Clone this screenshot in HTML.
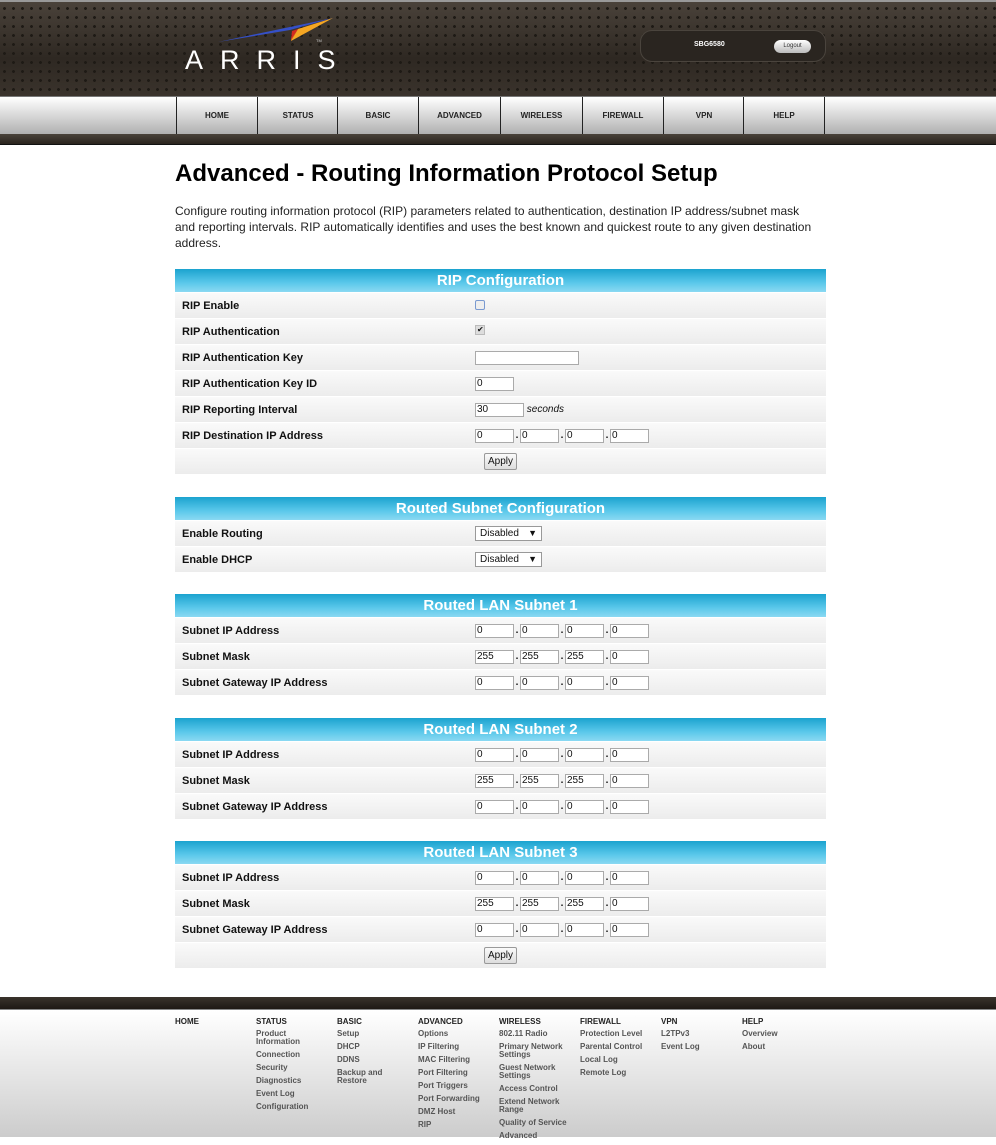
<!DOCTYPE html>
<html><head><style>
*{box-sizing:border-box}
body{margin:0;width:996px;height:1137px;overflow:hidden;font-family:"Liberation Sans",Arial,sans-serif;background:#fff;position:relative}
.hdr{position:absolute;left:0;top:0;width:996px;height:96px;background:radial-gradient(circle,#1e1a15 1.3px,transparent 1.6px) 0 2px/9px 9px,linear-gradient(#4a423a,#2e2822 60%,#3a332c);border-top:2px solid #999}
.logo{position:absolute;left:185px;top:43px;color:#fff;font-size:27px;letter-spacing:17px;font-weight:normal}
.pill{position:absolute;left:640px;top:28px;width:186px;height:32px;border-radius:12px;background:#2a2520;border:1px solid #4a443d}
.pill .m{position:absolute;left:53px;top:10px;color:#fff;font-size:7px;font-weight:bold}
.pill .lo{position:absolute;left:133px;top:9px;width:37px;height:13px;border-radius:7px;background:linear-gradient(#fff,#bbb);font-size:6px;text-align:center;line-height:13px;color:#333}
.nav{position:absolute;left:0;top:96px;width:996px;height:38px;background:linear-gradient(#fff,#d8d8d8 50%,#b0b0b0);border-top:1px solid #777}
.nav div{position:absolute;top:0;height:38px;width:81px;border-left:1px solid #222;font-size:8px;font-weight:bold;text-align:center;line-height:37px;color:#222}
.strip{position:absolute;left:0;top:134px;width:996px;height:11px;background:linear-gradient(#4a423a,#2a241e);border-bottom:1px solid #111}
h1{position:absolute;top:160px;left:175px;margin:0;font-size:24px;font-weight:bold;color:#000}
.desc{position:absolute;top:203px;left:175px;width:645px;font-size:12px;line-height:16px;color:#222;margin:0}
.sec{position:absolute;left:175px;width:651px}
.th{height:23px;background:linear-gradient(#1ba3cf,#5ac8ea 60%,#8ad9f2);color:#fff;font-weight:bold;font-size:15px;text-align:center;line-height:24px}
.r{height:26px;background:linear-gradient(#fafafa,#ececec);border-top:1px solid #fff;position:relative;font-size:11px;font-weight:bold;color:#111}
.r .l{position:absolute;left:7px;top:7px}
.r .v{position:absolute;left:300px;top:6px;font-size:11px;font-weight:normal}
.in{display:inline-block;height:14px;border:1px solid #aaa;background:#fff;font-size:10px;line-height:12px;padding-left:1px;vertical-align:top;font-weight:normal}
.ip .in{width:39px}
.dot{display:inline-block;width:6px;text-align:center;font-weight:bold;font-size:10px}
.sel{display:inline-block;width:67px;height:15px;border:1px solid #999;background:#fff;font-size:10px;line-height:13px;padding-left:4px;position:relative}
.sel:after{content:"▼";position:absolute;right:4px;top:0;font-size:9px}
.btn{display:inline-block;height:17px;border:1px solid #999;background:linear-gradient(#fafafa,#ddd);font-size:10px;padding:0 3px;line-height:15px;border-radius:2px}
.ftop{position:absolute;left:0;top:997px;width:996px;height:13px;background:linear-gradient(#3a332c,#1e1914);border-bottom:1px solid #888}
.foot{position:absolute;left:0;top:1011px;width:996px;height:126px;background:linear-gradient(#fff,#ccc)}
.fc{position:absolute;top:7px;font-size:8px;font-weight:bold;color:#555;line-height:8px}
.fc b{display:block;color:#222;margin-bottom:4px}
.fc span{display:block;margin-bottom:5px}
</style></head><body>
<div class="hdr">
<svg style="position:absolute;left:218px;top:15px" width="120" height="28" viewBox="0 0 120 28"><polygon points="0,25 115,1 72,13" fill="#3550c8"/><polygon points="115,1 80,12 73,24" fill="#f5a623"/><polygon points="80,12 73,24 74,16" fill="#f08020"/><polygon points="74,14 80,12 73,23" fill="#d42a20"/><text x="98" y="25" font-size="4" fill="#ccc">TM</text></svg>
<div class="logo">ARRIS</div>
<div class="pill"><span class="m">SBG6580</span><span class="lo">Logout</span></div>
</div>
<div class="nav">
<div style="left:176px">HOME</div><div style="left:257px">STATUS</div><div style="left:337px">BASIC</div><div style="left:418px;width:82px">ADVANCED</div><div style="left:500px;width:82px">WIRELESS</div><div style="left:582px">FIREWALL</div><div style="left:663px">VPN</div><div style="left:743px;width:82px;border-right:1px solid #222">HELP</div>
</div>
<div class="strip"></div>
<h1>Advanced - Routing Information Protocol Setup</h1>
<p class="desc">Configure routing information protocol (RIP) parameters related to authentication, destination IP address/subnet mask and reporting intervals. RIP automatically identifies and uses the best known and quickest route to any given destination address.</p>

<div class="sec" style="top:269px">
<div class="th">RIP Configuration</div>
<div class="r"><span class="l">RIP Enable</span><span class="v"><span class="in" style="width:10px;height:10px;border-color:#7a9ad0;border-radius:2px;background:#eee;margin-top:1px"></span></span></div>
<div class="r"><span class="l">RIP Authentication</span><span class="v" style="font-size:9px"><span class="in" style="width:10px;height:10px;background:#ddd;border-color:#bbb;font-size:8px;line-height:8px">✔</span></span></div>
<div class="r"><span class="l">RIP Authentication Key</span><span class="v"><span class="in" style="width:104px"></span></span></div>
<div class="r"><span class="l">RIP Authentication Key ID</span><span class="v"><span class="in" style="width:39px">0</span></span></div>
<div class="r"><span class="l">RIP Reporting Interval</span><span class="v"><span class="in" style="width:49px">30</span><i style="font-size:10px"> seconds</i></span></div>
<div class="r"><span class="l">RIP Destination IP Address</span><span class="v ip"><span class="in">0</span><span class="dot">.</span><span class="in">0</span><span class="dot">.</span><span class="in">0</span><span class="dot">.</span><span class="in">0</span></span></div>
<div class="r"><span class="v" style="left:309px;top:4px"><span class="btn">Apply</span></span></div>
</div>

<div class="sec" style="top:497px">
<div class="th">Routed Subnet Configuration</div>
<div class="r"><span class="l">Enable Routing</span><span class="v" style="top:5px"><span class="sel">Disabled</span></span></div>
<div class="r"><span class="l">Enable DHCP</span><span class="v" style="top:5px"><span class="sel">Disabled</span></span></div>
</div>

<div class="sec" style="top:594px">
<div class="th">Routed LAN Subnet 1</div>
<div class="r"><span class="l">Subnet IP Address</span><span class="v ip"><span class="in">0</span><span class="dot">.</span><span class="in">0</span><span class="dot">.</span><span class="in">0</span><span class="dot">.</span><span class="in">0</span></span></div>
<div class="r"><span class="l">Subnet Mask</span><span class="v ip"><span class="in">255</span><span class="dot">.</span><span class="in">255</span><span class="dot">.</span><span class="in">255</span><span class="dot">.</span><span class="in">0</span></span></div>
<div class="r"><span class="l">Subnet Gateway IP Address</span><span class="v ip"><span class="in">0</span><span class="dot">.</span><span class="in">0</span><span class="dot">.</span><span class="in">0</span><span class="dot">.</span><span class="in">0</span></span></div>
</div>

<div class="sec" style="top:718px">
<div class="th">Routed LAN Subnet 2</div>
<div class="r"><span class="l">Subnet IP Address</span><span class="v ip"><span class="in">0</span><span class="dot">.</span><span class="in">0</span><span class="dot">.</span><span class="in">0</span><span class="dot">.</span><span class="in">0</span></span></div>
<div class="r"><span class="l">Subnet Mask</span><span class="v ip"><span class="in">255</span><span class="dot">.</span><span class="in">255</span><span class="dot">.</span><span class="in">255</span><span class="dot">.</span><span class="in">0</span></span></div>
<div class="r"><span class="l">Subnet Gateway IP Address</span><span class="v ip"><span class="in">0</span><span class="dot">.</span><span class="in">0</span><span class="dot">.</span><span class="in">0</span><span class="dot">.</span><span class="in">0</span></span></div>
</div>

<div class="sec" style="top:841px">
<div class="th">Routed LAN Subnet 3</div>
<div class="r"><span class="l">Subnet IP Address</span><span class="v ip"><span class="in">0</span><span class="dot">.</span><span class="in">0</span><span class="dot">.</span><span class="in">0</span><span class="dot">.</span><span class="in">0</span></span></div>
<div class="r"><span class="l">Subnet Mask</span><span class="v ip"><span class="in">255</span><span class="dot">.</span><span class="in">255</span><span class="dot">.</span><span class="in">255</span><span class="dot">.</span><span class="in">0</span></span></div>
<div class="r"><span class="l">Subnet Gateway IP Address</span><span class="v ip"><span class="in">0</span><span class="dot">.</span><span class="in">0</span><span class="dot">.</span><span class="in">0</span><span class="dot">.</span><span class="in">0</span></span></div>
<div class="r"><span class="v" style="left:309px;top:4px"><span class="btn">Apply</span></span></div>
</div>

<div class="ftop"></div>
<div class="foot">
<div class="fc" style="left:175px"><b>HOME</b></div>
<div class="fc" style="left:256px"><b>STATUS</b><span>Product<br>Information</span><span>Connection</span><span>Security</span><span>Diagnostics</span><span>Event Log</span><span>Configuration</span></div>
<div class="fc" style="left:337px"><b>BASIC</b><span>Setup</span><span>DHCP</span><span>DDNS</span><span>Backup and<br>Restore</span></div>
<div class="fc" style="left:418px"><b>ADVANCED</b><span>Options</span><span>IP Filtering</span><span>MAC Filtering</span><span>Port Filtering</span><span>Port Triggers</span><span>Port Forwarding</span><span>DMZ Host</span><span>RIP</span></div>
<div class="fc" style="left:499px"><b>WIRELESS</b><span>802.11 Radio</span><span>Primary Network<br>Settings</span><span>Guest Network<br>Settings</span><span>Access Control</span><span>Extend Network<br>Range</span><span>Quality of Service</span><span>Advanced</span></div>
<div class="fc" style="left:580px"><b>FIREWALL</b><span>Protection Level</span><span>Parental Control</span><span>Local Log</span><span>Remote Log</span></div>
<div class="fc" style="left:661px"><b>VPN</b><span>L2TPv3</span><span>Event Log</span></div>
<div class="fc" style="left:742px"><b>HELP</b><span>Overview</span><span>About</span></div>
</div>
</body></html>
